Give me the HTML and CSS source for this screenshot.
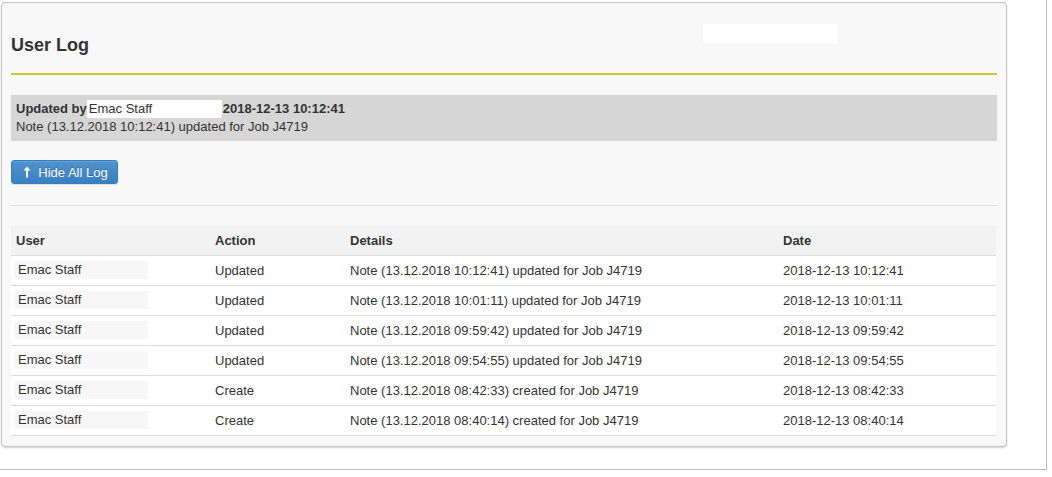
FILE: index.html
```html
<!DOCTYPE html>
<html>
<head>
<meta charset="utf-8">
<link rel="stylesheet" href="styles.css">
</head>
<body>
<div class="page">
  <div class="panel">
    <div class="panel-head">
      <h2 class="title">User Log</h2>
      <div class="redact-top"></div>
    </div>
    <div class="latest">
      <div class="line"><b>Updated by</b><span class="who">Emac Staff</span><b>2018-12-13 10:12:41</b></div>
      <div class="line">Note (13.12.2018 10:12:41) updated for Job J4719</div>
    </div>
    <div class="btn-row">
      <button class="btn"><svg class="arrow" width="8" height="12" viewBox="0 0 8 12"><path d="M4 0.5 L7.5 4.5 L5 4.5 L5 11.5 L3 11.5 L3 4.5 L0.5 4.5 Z" fill="#fff"/></svg>Hide All Log</button>
    </div>
    <div class="sep"></div>
    <table class="log">
      <thead>
        <tr><th class="c-user">User</th><th class="c-act">Action</th><th class="c-det">Details</th><th class="c-date">Date</th></tr>
      </thead>
      <tbody>
        <tr><td class="u"><span class="ubox">Emac Staff</span></td><td>Updated</td><td>Note (13.12.2018 10:12:41) updated for Job J4719</td><td>2018-12-13 10:12:41</td></tr>
        <tr><td class="u"><span class="ubox">Emac Staff</span></td><td>Updated</td><td>Note (13.12.2018 10:01:11) updated for Job J4719</td><td>2018-12-13 10:01:11</td></tr>
        <tr><td class="u"><span class="ubox">Emac Staff</span></td><td>Updated</td><td>Note (13.12.2018 09:59:42) updated for Job J4719</td><td>2018-12-13 09:59:42</td></tr>
        <tr><td class="u"><span class="ubox">Emac Staff</span></td><td>Updated</td><td>Note (13.12.2018 09:54:55) updated for Job J4719</td><td>2018-12-13 09:54:55</td></tr>
        <tr><td class="u"><span class="ubox">Emac Staff</span></td><td>Create</td><td>Note (13.12.2018 08:42:33) created for Job J4719</td><td>2018-12-13 08:42:33</td></tr>
        <tr><td class="u"><span class="ubox">Emac Staff</span></td><td>Create</td><td>Note (13.12.2018 08:40:14) created for Job J4719</td><td>2018-12-13 08:40:14</td></tr>
      </tbody>
    </table>
  </div>
</div>
</body>
</html>
```
FILE: styles.css
```css
* { box-sizing: border-box; }
html, body { margin: 0; padding: 0; background: #fff; }
body {
  font-family: "Liberation Sans", Arial, sans-serif;
  font-size: 13px;
  color: #333;
}
.page {
  width: 1047px;
  height: 470px;
  border-right: 1px solid #bbb;
  border-bottom: 1px solid #bbb;
  padding: 2px 0 0 1px;
}
.panel {
  width: 1006px;
  height: 445px;
  background: #f8f8f8;
  border: 1px solid #c4c4c4;
  border-radius: 4px;
  box-shadow: 0 1px 2px rgba(0,0,0,0.18);
  padding: 0 9px;
}
.panel-head {
  height: 72px;
  border-bottom: 2px solid #c4cf2c;
  display: flex;
  align-items: flex-start;
  position: relative;
}
.title {
  margin: 31px 0 0 0;
  font-size: 18px;
  font-weight: bold;
  line-height: 22px;
  color: #333;
}
.redact-top {
  position: absolute;
  left: 692px;
  top: 21px;
  width: 135px;
  height: 19px;
  background: #fff;
}
.latest {
  margin-top: 20px;
  background: #d6d6d6;
  padding: 5px 5px;
  height: 46px;
}
.line { line-height: 18px; height: 18px; }
.who {
  display: inline-block;
  background: #fff;
  width: 135px;
  height: 18px;
  vertical-align: top;
  margin-left: 0;
  margin-right: 1px;
  padding-left: 2px;
  font-weight: normal;
}
.btn-row { margin-top: 19px; height: 24px; }
.btn {
  height: 24px;
  width: 107px;
  padding: 0 0 0 2px;
  border: 1px solid #357ebd;
  border-radius: 3px;
  background: linear-gradient(#4f93cf, #3a7fc0);
  color: #fff;
  font-family: "Liberation Sans", Arial, sans-serif;
  font-size: 13px;
  text-shadow: 0 -1px 0 rgba(0,0,0,0.25);
  box-shadow: inset 0 1px 0 rgba(255,255,255,0.15), 0 1px 1px rgba(0,0,0,0.1);
  display: flex;
  align-items: center;
  justify-content: center;
  gap: 7px;
}
.arrow { display: block; }
.sep {
  margin-top: 21px;
  border-top: 1px solid #e3e3e3;
  height: 0;
}
.log {
  margin-top: 20px;
  width: 985px;
  border-collapse: collapse;
  background: #fff;
}
.log th, .log td {
  text-align: left;
  height: 30px;
  padding: 0 5px;
  border-bottom: 1px solid #ddd;
  vertical-align: middle;
  white-space: nowrap;
}
.log th {
  height: 29px;
  background: #f2f2f2;
  font-weight: bold;
  border-bottom: 1px solid #ddd;
}
.c-user { width: 199px; }
.c-act { width: 135px; }
.c-det { width: 433px; }
.log td.u { padding-left: 3px; }
.ubox {
  display: inline-block;
  width: 134px;
  height: 18px;
  line-height: 18px;
  background: #f7f7f7;
  padding-left: 4px;
}
```
